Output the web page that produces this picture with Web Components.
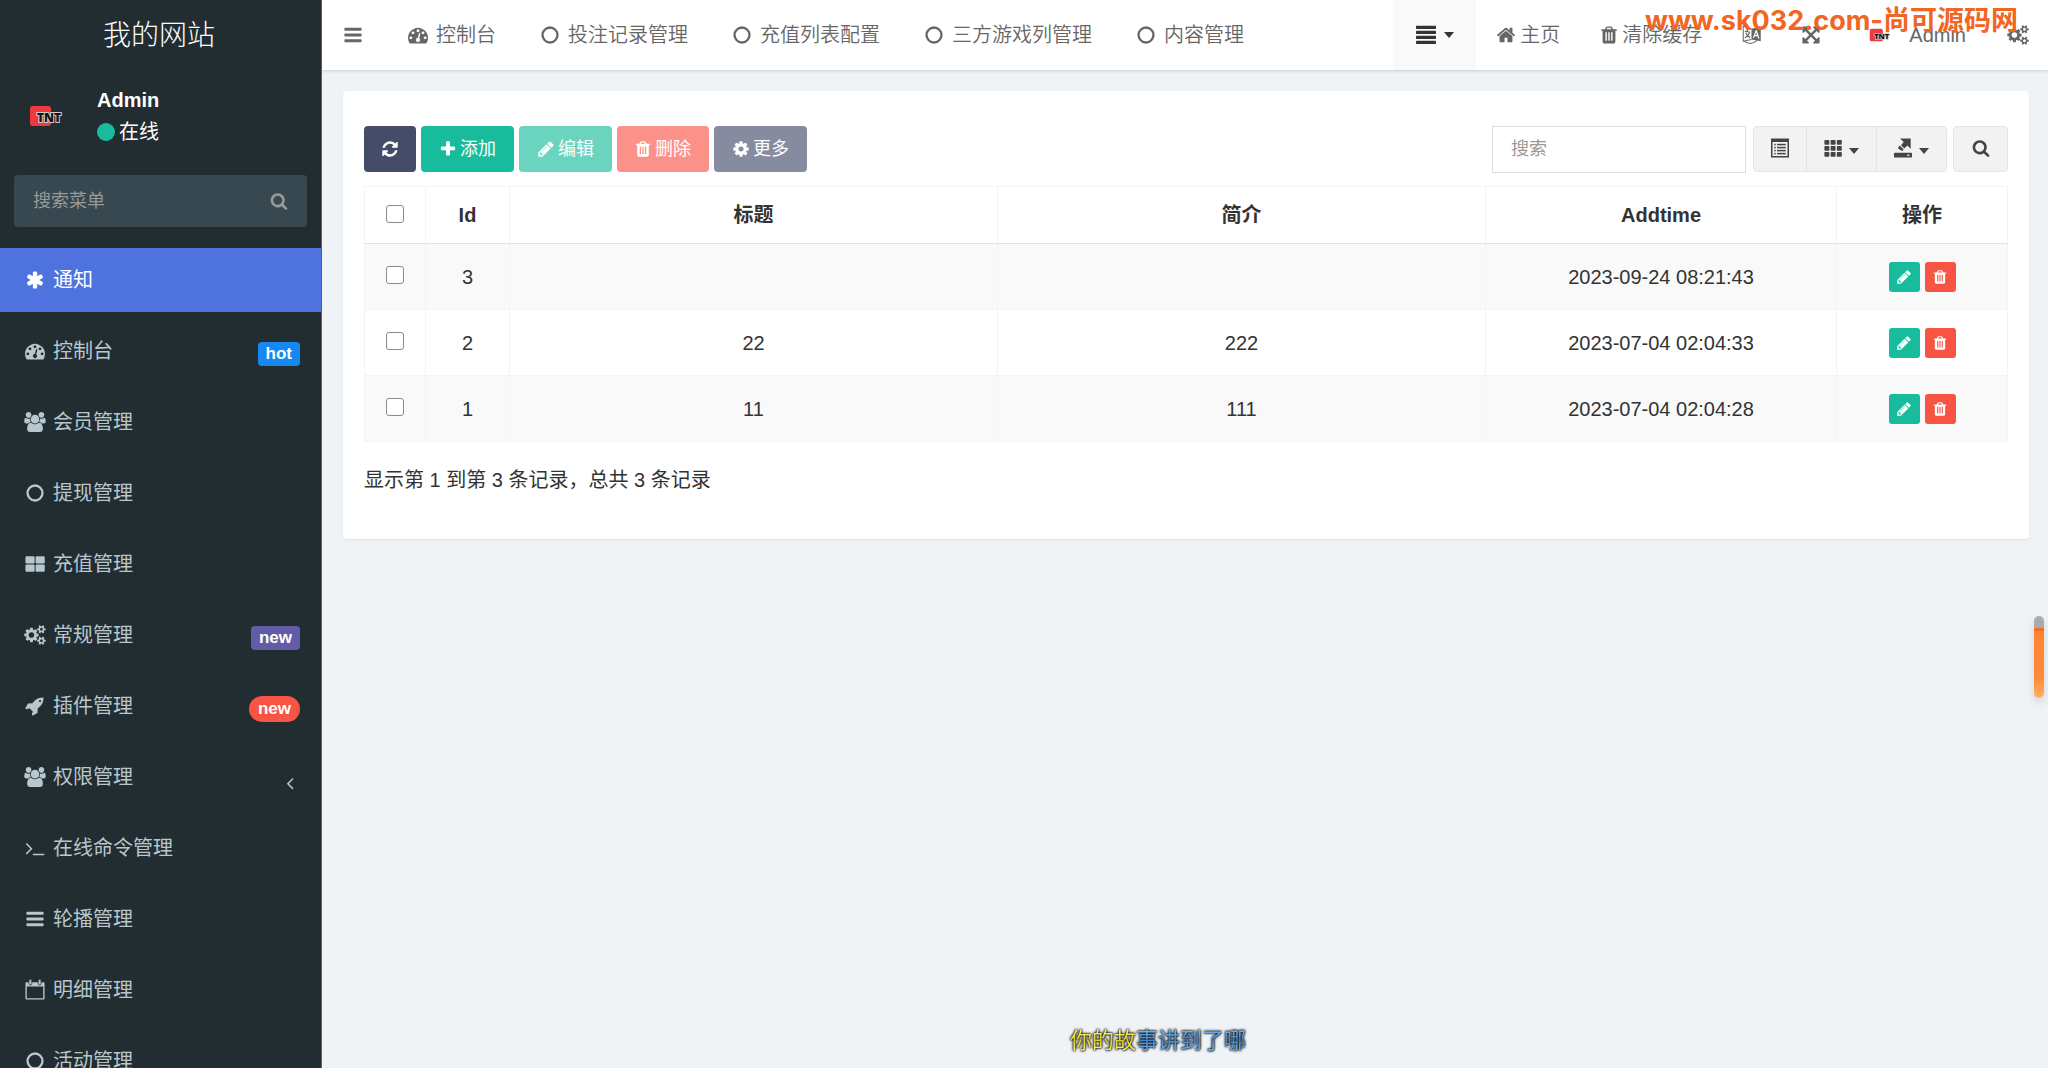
<!DOCTYPE html>
<html lang="zh-CN">
<head>
<meta charset="utf-8">
<title>通知</title>
<style>
html,body{margin:0;height:100%}
body{background:#eff3f6;font:20px/28px "Liberation Sans","Noto Sans CJK SC",sans-serif;color:#333;overflow:hidden}
</style>
</head>
<body>
<admin-app></admin-app>
<script>
const rect=(x,y,w,h,r=0)=>`<rect x="${x}" y="${y}" width="${w}" height="${h}" rx="${r}"/>`;
const path=d=>`<path d="${d}"/>`;
const ICONS={
bars:[256,768,1280].map(y=>rect(128,y,1536,256,64)).join(''),
justify:[60,510,960,1410].map(y=>rect(0,y,1792,290,40)).join(''),
circle:'<circle cx="896" cy="896" r="670" fill="none" stroke="currentColor" stroke-width="210"/>',
thlarge:[[40,200],[950,200],[40,930],[950,930]].map(p=>rect(p[0],p[1],820,650,110)).join(''),
th:[0,1,2].map(r=>[0,1,2].map(c=>rect(40+c*620,100+r*600,490,460,70)).join('')).join(''),
search:path("M1216 832q0-185-131.500-316.500t-316.500-131.500-316.500 131.500-131.500 316.500 131.500 316.500 316.500 131.500 316.500-131.500 131.500-316.500zm512 832q0 52-38 90t-90 38q-54 0-90-38l-343-342q-179 124-399 124-143 0-273.500-55.500t-225-150-150-225-55.500-273.500 55.500-273.500 150-225 225-150 273.500-55.500 273.500 55.500 225 150 150 225 55.500 273.500q0 220-124 399l343 343q37 37 37 90z"),
plus:path("M1600 736v192q0 40-28 68t-68 28h-416v416q0 40-28 68t-68 28h-192q-40 0-68-28t-28-68v-416h-416q-40 0-68-28t-28-68v-192q0-40 28-68t68-28h416v-416q0-40 28-68t68-28h192q40 0 68 28t28 68v416h416q40 0 68 28t28 68z"),
cog:path("M1152 896q0-106-75-181t-181-75-181 75-75 181 75 181 181 75 181-75 75-181zm512-109v222q0 12-8 23t-20 13l-185 28q-19 54-39 91 35 50 107 138 10 12 10 25t-9 23q-27 37-99 108t-94 71q-12 0-26-9l-138-108q-44 23-91 38-16 136-29 186-7 28-36 28h-222q-14 0-24.500-8.500t-11.500-21.500l-28-184q-49-16-90-37l-141 107q-10 9-25 9-14 0-25-11-126-114-165-168-7-10-7-23 0-12 8-23 15-21 51-66.500t54-70.500q-27-50-41-99l-183-27q-13-2-21-12.500t-8-23.500v-222q0-12 8-23t19-13l186-28q14-46 39-92-40-57-107-138-10-12-10-24 0-10 9-23 26-36 98.500-107.500t94.500-71.500q13 0 26 10l138 107q44-23 91-38 16-136 29-186 7-28 36-28h222q14 0 24.500 8.500t11.500 21.500l28 184q49 16 90 37l142-107q9-9 24-9 13 0 25 10 129 119 165 170 7 8 7 22 0 12-8 23-15 21-51 66.500t-54 70.500q26 50 41 98l183 28q13 2 21 12.500t8 23.500z"),
trash:path("M704 1376v-704q0-14-9-23t-23-9h-64q-14 0-23 9t-9 23v704q0 14 9 23t23 9h64q14 0 23-9t9-23zm256 0v-704q0-14-9-23t-23-9h-64q-14 0-23 9t-9 23v704q0 14 9 23t23 9h64q14 0 23-9t9-23zm256 0v-704q0-14-9-23t-23-9h-64q-14 0-23 9t-9 23v704q0 14 9 23t23 9h64q14 0 23-9t9-23zm-544-992h448l-48-117q-7-9-17-11h-317q-10 2-17 11zm928 32v64q0 14-9 23t-23 9h-96v948q0 83-47 143.500t-113 60.500h-832q-66 0-113-58.500t-47-141.500v-952h-96q-14 0-23-9t-9-23v-64q0-14 9-23t23-9h309l70-167q15-37 54-63t79-26h320q40 0 79 26t54 63l70 167h309q14 0 23 9t9 23z"),
pencil:path("M491 1536l91-91-235-235-91 91v107h128v128h107zm523-928q0-22-22-22-10 0-17 7l-542 542q-7 7-7 17 0 22 22 22 10 0 17-7l542-542q7-7 7-17zm-54-192l416 416-832 832h-416v-416zm683 96q0 53-37 90l-166 166-416-416 166-165q36-38 90-38 53 0 91 38l235 234q37 39 37 91z"),
refresh:path("M1639 1056q0 5-1 7-64 268-268 434.500t-478 166.500q-146 0-282.500-55t-243.500-157l-129 129q-19 19-45 19t-45-19-19-45v-448q0-26 19-45t45-19h448q26 0 45 19t19 45-19 45l-137 137q71 66 161 102t187 36q134 0 250-65t186-179q11-17 53-117 8-23 30-23h192q13 0 22.500 9.500t9.500 22.500zm25-800v448q0 26-19 45t-45 19h-448q-26 0-45-19t-19-45 19-45l138-138q-148-137-349-137-134 0-250 65t-186 179q-11 17-53 117-8 23-30 23h-199q-13 0-22.500-9.500t-9.500-22.500v-7q65-268 270-434.500t480-166.500q146 0 284 55.500t245 156.500l130-129q19-19 45-19t45 19 19 45z"),
home:path("M1472 992v480q0 26-19 45t-45 19h-384v-384h-256v384h-384q-26 0-45-19t-19-45v-480q0-1 .5-3t.5-3l575-474 575 474q1 2 1 6zm223-69l-62 74q-8 9-21 11h-3q-13 0-21-7l-692-577-692 577q-12 8-24 7-13-2-21-11l-62-74q-8-10-7-23.500t11-21.500l719-599q32-26 76-26t76 26l244 204v-195q0-14 9-23t23-9h192q14 0 23 9t9 23v408l219 182q10 8 11 21.500t-7 23.500z"),
asterisk:path("M1546 1050q46 26 59.500 77.500t-12.500 97.500l-64 110q-26 46-77.500 59.500t-97.500-12.500l-266-153v307q0 52-38 90t-90 38h-128q-52 0-90-38t-38-90v-307l-266 153q-46 26-97.500 12.500t-77.500-59.500l-64-110q-26-46-12.500-97.500t59.500-77.500l266-154-266-154q-46-26-59.500-77.500t12.500-97.500l64-110q26-46 77.500-59.500t97.500 12.500l266 153v-307q0-52 38-90t90-38h128q52 0 90 38t38 90v307l266-153q46-26 97.500-12.500t77.500 59.500l64 110q26 46 12.500 97.500t-59.500 77.500l-266 154z"),
expand:path("M1411 541l-355 355 355 355 144-144q29-31 70-14 39 17 39 59v448q0 26-19 45t-45 19h-448q-42 0-59-40-17-39 14-69l144-144-355-355-355 355 144 144q31 30 14 69-17 40-59 40h-448q-26 0-45-19t-19-45v-448q0-42 40-59 39-17 69 14l144 144 355-355-355-355-144 144q-19 19-45 19-12 0-24-5-40-17-40-59v-448q0-26 19-45t45-19h448q42 0 59 40 17 39-14 69l-144 144 355 355 355-355-144-144q-31-30-14-69 17-40 59-40h448q26 0 45 19t19 45v448q0 42-39 59-13 5-25 5-26 0-45-19z"),
rocket:path("M1440 448q0-40-28-68t-68-28-68 28-28 68 28 68 68 28 68-28 28-68zm224-288q0 249-75.500 430.500t-253.500 360.500q-81 80-195 176l-20 379q-2 16-16 26l-384 224q-7 4-16 4-12 0-23-9l-64-64q-13-14-8-32l85-276-281-281-276 85q-3 1-9 1-14 0-23-9l-64-64q-17-19-5-39l224-384q10-14 26-16l379-20q96-114 176-195 188-187 358-258t431-71q14 0 24 9.500t10 22.500z"),
terminal:path("M649 983l-466 466q-10 10-23 10t-23-10l-50-50q-10-10-10-23t10-23l393-393-393-393q-10-10-10-23t10-23l50-50q10-10 23-10t23 10l466 466q10 10 10 23t-10 23zm1079 457v64q0 14-9 23t-23 9h-960q-14 0-23-9t-9-23v-64q0-14 9-23t23-9h960q14 0 23 9t9 23z"),
left:path("M1203 544q0 13-10 23l-393 393 393 393q10 10 10 23t-10 23l-50 50q-10 10-23 10t-23-10l-466-466q-10-10-10-23t10-23l466-466q10-10 23-10t23 10l50 50q10 10 10 23z"),
dashboard:path("M384 1152q0-53-37.500-90.500t-90.500-37.500-90.500 37.500-37.500 90.500 37.500 90.500 90.500 37.500 90.500-37.500 37.500-90.500zm192-448q0-53-37.500-90.500t-90.500-37.500-90.500 37.500-37.500 90.500 37.500 90.500 90.500 37.500 90.500-37.500 37.500-90.500zm428 481l101-382q6-26-7.500-48.500t-38.500-29.500-48 6.500-30 39.500l-101 382q-60 5-107 43.500t-63 98.500q-20 77 20 146t117 89 146-20 89-117q16-60-6-117t-72-91zm660-33q0-53-37.500-90.500t-90.500-37.500-90.500 37.500-37.500 90.500 37.500 90.500 90.500 37.500 90.500-37.500 37.500-90.500zm-640-640q0-53-37.500-90.500t-90.500-37.500-90.500 37.500-37.500 90.500 37.500 90.500 90.500 37.500 90.500-37.500 37.500-90.500zm448 192q0-53-37.500-90.500t-90.500-37.500-90.500 37.500-37.500 90.500 37.500 90.500 90.500 37.500 90.500-37.500 37.500-90.500zm320 448q0 261-141 483-19 29-54 29h-1402q-35 0-54-29-141-221-141-483 0-182 71-348t191-286 286-191 348-71 348 71 286 191 191 286 71 348z"),
group:path("M529 896q-162 5-265 128h-134q-82 0-138-40.500t-56-118.500q0-353 124-353 6 0 43.500 21t97.500 42.500 119 21.500q67 0 133-23-5 37-5 66 0 139 81 256zm1071 637q0 120-73 189.500t-194 69.500h-874q-121 0-194-69.500t-73-189.500q0-53 3.500-103.500t14-109 26.500-108.500 43-97.500 62-81 85.500-53.500 111.500-20q10 0 43 21.500t73 48 107 48 135 21.500 135-21.500 107-48 73-48 43-21.500q61 0 111.500 20t85.500 53.500 62 81 43 97.500 26.500 108.500 14 109 3.500 103.500zm-1024-1277q0 106-75 181t-181 75-181-75-75-181 75-181 181-75 181 75 75 181zm704 384q0 159-112.500 271.500t-271.500 112.500-271.500-112.500-112.500-271.500 112.500-271.500 271.500-112.500 271.500 112.500 112.500 271.500zm576 225q0 78-56 118.500t-138 40.500h-134q-103-123-265-128 81-117 81-256 0-29-5-66 66 23 133 23 59 0 119-21.500t97.500-42.500 43.500-21q124 0 124 353zm-128-609q0 106-75 181t-181 75-181-75-75-181 75-181 181-75 181 75 75 181z"),
cogs:path("M832 896q0-106-75-181t-181-75-181 75-75 181 75 181 181 75 181-75 75-181zm768 512q0-52-38-90t-90-38-90 38-38 90q0 53 37.500 90.500t90.500 37.500 90.500-37.500 37.500-90.500zm0-1024q0-52-38-90t-90-38-90 38-38 90q0 53 37.500 90.500t90.500 37.500 90.500-37.500 37.500-90.500zm-384 421v185q0 10-7 19.500t-16 10.500l-155 24q-11 35-32 76 34 48 90 115 7 11 7 20 0 12-7 19-23 30-82.500 89.500t-78.500 59.500q-11 0-21-7l-115-90q-37 19-77 31-11 108-23 155-7 24-30 24h-186q-11 0-20-7.500t-10-17.500l-23-153q-34-10-75-31l-118 89q-7 7-20 7-11 0-21-8-144-133-144-160 0-9 7-19 10-14 41-53t47-61q-23-44-35-82l-152-24q-10-1-17-9.500t-7-19.500v-185q0-10 7-19.500t16-10.500l155-24q11-35 32-76-34-48-90-115-7-11-7-20 0-12 7-20 22-30 82-89t79-59q11 0 21 7l115 90q34-18 77-32 11-108 23-154 7-24 30-24h186q11 0 20 7.500t10 17.500l23 153q34 10 75 31l118-89q8-7 20-7 11 0 21 8 144 133 144 160 0 8-7 19-12 16-42 54t-45 60q23 48 34 82l152 23q10 2 17 10.500t7 19.500zm640 533v140q0 16-149 31-12 27-30 52 51 113 51 138 0 4-4 7-122 71-124 71-8 0-46-47t-52-68q-20 2-30 2t-30-2q-14 21-52 68t-46 47q-2 0-124-71-4-3-4-7 0-25 51-138-18-25-30-52-149-15-149-31v-140q0-16 149-31 13-29 30-52-51-113-51-138 0-4 4-7 4-2 35-20t59-34 30-16q8 0 46 46.500t52 67.500q20-2 30-2t30 2q51-71 92-112l6-2q4 0 124 70 4 3 4 7 0 25-51 138 17 23 30 52 149 15 149 31zm0-1024v140q0 16-149 31-12 27-30 52 51 113 51 138 0 4-4 7-122 71-124 71-8 0-46-47t-52-68q-20 2-30 2t-30-2q-14 21-52 68t-46 47q-2 0-124-71-4-3-4-7 0-25 51-138-18-25-30-52-149-15-149-31v-140q0-16 149-31 13-29 30-52-51-113-51-138 0-4 4-7 4-2 35-20t59-34 30-16q8 0 46 46.500t52 67.500q20-2 30-2t30 2q51-71 92-112l6-2q4 0 124 70 4 3 4 7 0 25-51 138 17 23 30 52 149 15 149 31z"),
calendar:'<path fill-rule="evenodd" d="M40 300q0-90 90-90h1532q90 0 90 90v1360q0 90-90 90h-1532q-90 0-90-90zM160 590v1040h1472v-1040z"/><g stroke="#222d32" stroke-width="70"><rect x="350" y="-60" width="260" height="510" rx="130"/><rect x="1182" y="-60" width="260" height="510" rx="130"/></g>',
lang:'<g fill="none" stroke="currentColor"><path stroke-width="90" d="M850 330L110 90V1450L850 1290M180 1450q620 420 1150-40"/><path stroke-width="110" d="M250 560l480 90M450 420l50 160M680 680q-120 330-430 480M330 700q140 300 400 430"/></g><path fill-rule="evenodd" d="M850 330L1680 130V1460L850 1290zM1080 1170l60-160h240l70 200 120 20-240-760h-110l-240 680zM1180 890l80-250 80 250z"/>',
listalt:'<path fill-rule="evenodd" d="M0 -60h1792v1912H0zM150 300v1402h1492V300z"/>'+[480,780,1080,1380].map(y=>rect(320,y,150,150)+rect(600,y,870,150)).join(''),
share:rect(0,1380,1792,472,90)+'<path d="M600-60h1060v1030l-330-330-300 300-330-330 270-300z"/><path d="M700 770l270 270-150 150-420-250 130-300z"/><rect x="1300" y="1560" width="260" height="110" fill="#f2f2f2"/>'
};
const shadow=(el,html)=>{el.attachShadow({mode:'open'}).innerHTML=html};

customElements.define('fa-icon',class extends HTMLElement{
  connectedCallback(){
    shadow(this,`<style>:host{display:inline-flex;flex:none;align-items:center;justify-content:center;width:var(--w,20px);height:var(--s,20px)}svg{flex:none;width:var(--s,20px);height:var(--s,20px);overflow:visible;fill:currentColor;color:inherit}</style>
    <svg viewBox="0 0 1792 1792" aria-hidden="true">${ICONS[this.getAttribute('name')]}</svg>`);
  }
});

customElements.define('caret-down',class extends HTMLElement{
  connectedCallback(){
    shadow(this,`<style>:host{display:inline-block;flex:none;border:5px solid transparent;border-top:6px solid currentColor;border-bottom:0}</style>`);
  }
});

customElements.define('tnt-avatar',class extends HTMLElement{
  connectedCallback(){
    shadow(this,`<style>:host{display:block;flex:none}svg{display:block;width:100%;height:100%}</style>
    <svg viewBox="0 0 64 64" role="img" aria-label="TNT"><rect x="14" y="22" width="21" height="20" rx="3" fill="#ee3a3c"/>
    <text x="21" y="38" font-family="Open Sans,sans-serif" font-weight="800" font-size="12" fill="#151515" stroke="#c9c9c9" stroke-width="2" paint-order="stroke">TNT</text></svg>`);
  }
});

customElements.define('side-item',class extends HTMLElement{
  connectedCallback(){
    const badge=this.getAttribute('badge'),kind=this.getAttribute('kind')||'';
    shadow(this,`<style>
    :host{display:block}
    a{display:flex;align-items:center;gap:8px;height:64px;padding:0 21px 0 24px;color:#b8c7ce;text-decoration:none}
    :host([active]) a{background:#4e73df;color:#fff}
    fa-icon{--w:21px}
    .badge{margin:5px 0 0 auto;padding:0 8px;border-radius:4px;background:#1688f1;color:#fff;font-weight:700;font-size:17px;line-height:24px}
    .purple{background:#605ca8}.red{background:#f75444;border-radius:13px;padding:0 9px;line-height:26px}
    .arrow{margin:12px 0 0 auto}
    </style><a href="#"><fa-icon name="${this.getAttribute('icon')}"></fa-icon><slot></slot>
    ${badge?`<span class="badge ${kind}">${badge}</span>`:''}${this.hasAttribute('tree')?'<fa-icon class="arrow" name="left"></fa-icon>':''}</a>`);
  }
});

customElements.define('side-bar',class extends HTMLElement{
  connectedCallback(){
    shadow(this,`<style>
    :host{display:flex;flex-direction:column;flex:none;box-sizing:border-box;width:322px;height:100vh;overflow:hidden;background:#222d32;border-right:1px solid #59646a}
    .logo{flex:none;height:70px;line-height:72px;padding-right:3px;text-align:center;font-size:28px;font-weight:300;color:#fff;text-decoration:none}
    .user{display:flex;flex:none;height:92px;gap:17px;padding:14px 16px 0;box-sizing:border-box;color:#fff}
    tnt-avatar{width:64px;height:64px}
    .name{font-weight:700;line-height:32px}
    .state{display:flex;align-items:center;gap:4px;line-height:32px}
    .dot{width:18px;height:18px;border-radius:50%;background:#18bc9c}
    .find{display:flex;flex:none;align-items:center;margin:13px 14px 21px;height:52px;border-radius:4px;background:#374850;color:#999}
    input{flex:1;min-width:0;height:52px;padding:0 0 0 19px;box-sizing:border-box;border:0;background:none;outline:0;font:inherit;font-size:18px;color:#fff}
    input::placeholder{color:#999;opacity:1}
    button{display:flex;border:0;background:none;color:inherit;padding:0 18px;}
    nav{display:flex;flex-direction:column;gap:7px}
    </style>
    <a class="logo" href="#">我的网站</a>
    <div class="user"><tnt-avatar></tnt-avatar><div><div class="name">Admin</div><div class="state"><span class="dot"></span>在线</div></div></div>
    <form class="find"><input type="text" placeholder="搜索菜单" aria-label="搜索菜单"><button type="button" aria-label="搜索"><fa-icon name="search" style="--s:18px"></fa-icon></button></form>
    <nav>
      <side-item icon="asterisk" active>通知</side-item>
      <side-item icon="dashboard" badge="hot">控制台</side-item>
      <side-item icon="group">会员管理</side-item>
      <side-item icon="circle">提现管理</side-item>
      <side-item icon="thlarge">充值管理</side-item>
      <side-item icon="cogs" badge="new" kind="purple">常规管理</side-item>
      <side-item icon="rocket" badge="new" kind="red">插件管理</side-item>
      <side-item icon="group" tree>权限管理</side-item>
      <side-item icon="terminal">在线命令管理</side-item>
      <side-item icon="bars">轮播管理</side-item>
      <side-item icon="calendar">明细管理</side-item>
      <side-item icon="circle">活动管理</side-item>
    </nav>`);
  }
});

customElements.define('nav-link',class extends HTMLElement{
  connectedCallback(){
    shadow(this,`<style>:host{display:block;--gap:7px;--w:22px}a{display:flex;align-items:center;gap:var(--gap);height:54px;color:inherit;text-decoration:none;white-space:nowrap}</style>
    <a href="#" aria-label="${this.getAttribute('label')||this.textContent}">${this.hasAttribute('icon')?`<fa-icon name="${this.getAttribute('icon')}"></fa-icon>`:'<slot name="media"></slot>'}<slot></slot></a>`);
  }
});

customElements.define('top-bar',class extends HTMLElement{
  connectedCallback(){
    shadow(this,`<style>
    :host{display:flex;flex:none;height:70px;background:#fff;color:#666;font-weight:350;box-shadow:0 1px 3px rgba(0,0,0,.16)}
    button{border:0;padding:0;font:inherit;color:inherit}
    .toggle{display:flex;align-items:center;background:none;padding:0 0 0 20px;margin-right:43px}
    .tabs,.tools{display:flex;align-items:center}
    .tabs{gap:43px;height:70px}
    .menu{display:flex;align-items:center;justify-content:center;gap:8px;width:83px;height:70px;margin-left:auto;background:#f9f9f9;color:#333}
    .tools{gap:41px;padding:0 20px 0 21px}
    .tools nav-link{--gap:5px;--w:18px}
    .tools .trash{--w:16px}.tools .cogs{--w:21px}.tools .me{--gap:8px}
    tnt-avatar{width:40px;height:48px}
    </style>
    <button class="toggle" type="button" aria-label="菜单"><fa-icon name="bars" style="--w:22px"></fa-icon></button>
    <nav class="tabs">
      <nav-link icon="dashboard">控制台</nav-link><nav-link icon="circle">投注记录管理</nav-link><nav-link icon="circle">充值列表配置</nav-link><nav-link icon="circle">三方游戏列管理</nav-link><nav-link icon="circle">内容管理</nav-link>
    </nav>
    <button class="menu" type="button" aria-label="列表"><fa-icon name="justify"></fa-icon><caret-down></caret-down></button>
    <div class="tools">
      <nav-link icon="home">主页</nav-link><nav-link class="trash" icon="trash">清除缓存</nav-link>
      <nav-link icon="lang" label="语言"></nav-link><nav-link icon="expand" label="全屏"></nav-link>
      <nav-link class="me"><tnt-avatar slot="media"></tnt-avatar>Admin</nav-link>
      <nav-link class="cogs" icon="cogs" label="设置"></nav-link>
    </div>`);
  }
});

customElements.define('tool-button',class extends HTMLElement{
  connectedCallback(){
    shadow(this,`<style>:host{display:block;--s:18px;--w:17px}
    button{display:flex;align-items:center;gap:4px;height:46px;padding:0 18px;border:0;border-radius:4px;background:var(--bg);color:#fff;font:inherit;font-size:18px;line-height:26px;white-space:nowrap}
    :host([icon=refresh]),:host([icon=trash]){--w:16px}
    :host([small]) button{height:30px;width:31px;padding:0;justify-content:center;border-radius:3px}
    :host([small]){--s:16px}
    </style><button type="button" aria-label="${this.getAttribute('label')||this.textContent}"><fa-icon name="${this.getAttribute('icon')}"></fa-icon><slot></slot></button>`);
  }
});

customElements.define('table-toolbar',class extends HTMLElement{
  connectedCallback(){
    shadow(this,`<style>
    :host{display:flex;gap:5px;height:47px;align-items:flex-start}
    input{box-sizing:border-box;width:254px;height:47px;margin:0 2px 0 auto;padding:0 18px;border:1px solid #dcdee4;border-radius:0;font:inherit;font-size:18px;outline:0}
    input::placeholder{color:#999;opacity:1}
    .group{display:flex;margin-right:1px}
    button{display:flex;align-items:center;justify-content:center;gap:7px;box-sizing:border-box;height:46px;border:1px solid #e4e4e4;background:#f2f2f2;color:#444;padding:0 0 2px;border-radius:4px;--s:18px;--w:18px}
    .group button+button{margin-left:-1px}
    .group button:first-child{width:54px;border-radius:4px 0 0 4px}
    .group button:nth-child(2){width:71px;border-radius:0}
    .group button:nth-child(3){width:71px;border-radius:0 4px 4px 0}
    .go{width:55px}
    caret-down{margin-top:5px}
    </style>
    <tool-button icon="refresh" label="刷新" style="--bg:#444c69"></tool-button>
    <tool-button icon="plus" style="--bg:#18bc9c">添加</tool-button>
    <tool-button icon="pencil" style="--bg:#6bd4bf">编辑</tool-button>
    <tool-button icon="trash" style="--bg:#fb9188">删除</tool-button>
    <tool-button icon="cog" style="--bg:#868ba0">更多</tool-button>
    <input type="text" placeholder="搜索" aria-label="搜索">
    <div class="group"><button type="button" aria-label="切换"><fa-icon name="listalt"></fa-icon></button><button type="button" aria-label="列"><fa-icon name="th"></fa-icon><caret-down></caret-down></button><button type="button" aria-label="导出"><fa-icon name="share"></fa-icon><caret-down></caret-down></button></div>
    <button class="go" type="button" aria-label="搜索"><fa-icon name="search"></fa-icon></button>`);
  }
});

customElements.define('notice-table',class extends HTMLElement{
  connectedCallback(){
    const rows=[['3','','','2023-09-24 08:21:43'],['2','22','222','2023-07-04 02:04:33'],['1','11','111','2023-07-04 02:04:28']];
    shadow(this,`<style>
    :host{display:block}
    table{width:100%;table-layout:fixed;border-collapse:collapse;text-align:center}
    th,td{border:1px solid #f4f4f4;padding:0;box-sizing:border-box}
    th{height:57px;border-bottom-color:#e4e4e4}
    td{height:66px}
    tbody tr:nth-child(odd){background:#f9f9f9}
    .c{width:61px}.i{width:84px}.d{width:351px}.o{width:171px}
    input{display:block;appearance:none;box-sizing:border-box;width:18px;height:18px;margin:0 auto 3px;border:1px solid #8a8a8a;border-radius:3px;background:#fff}
    .ops{display:flex;justify-content:center;gap:5px}
    p{margin:24px 0 0}
    </style>
    <table><thead><tr><th class="c"><input type="checkbox" aria-label="全选"></th><th class="i">Id</th><th>标题</th><th>简介</th><th class="d">Addtime</th><th class="o">操作</th></tr></thead>
    <tbody>${rows.map(r=>`<tr><td><input type="checkbox" aria-label="选择 ${r[0]}"></td>${r.map(v=>`<td>${v}</td>`).join('')}<td><div class="ops"><tool-button small icon="pencil" label="编辑" style="--bg:#18bc9c"></tool-button><tool-button small icon="trash" label="删除" style="--bg:#f75444"></tool-button></div></td></tr>`).join('')}</tbody></table>
    <p>显示第 1 到第 3 条记录，总共 3 条记录</p>`);
  }
});

customElements.define('panel-card',class extends HTMLElement{
  connectedCallback(){
    shadow(this,`<style>:host{display:flex;flex-direction:column;gap:13px;margin:21px 19px 0 21px;padding:35px 21px 45px;background:#fff;border-radius:4px;box-shadow:0 1px 2px rgba(0,0,0,.07)}</style><slot></slot>`);
  }
});

customElements.define('site-mark',class extends HTMLElement{
  connectedCallback(){
    shadow(this,`<style>:host{position:absolute;right:30px;top:1px;display:block;white-space:nowrap;font:700 27px/40px Inter,"Noto Sans CJK SC",sans-serif;color:#f26522;pointer-events:none}</style><slot></slot>`);
  }
});

customElements.define('lyric-line',class extends HTMLElement{
  connectedCallback(){
    shadow(this,`<style>:host{position:absolute;left:1070px;bottom:14px;display:block;white-space:nowrap;font:22px/32px "Noto Sans CJK SC",sans-serif;filter:drop-shadow(0 0 1px #000) drop-shadow(0 0 1px #333);pointer-events:none}
    span{color:transparent;background:linear-gradient(#fff36a 30%,#d8cf20 55%,#f4ea50 80%);-webkit-background-clip:text;background-clip:text}
    .rest{background-image:linear-gradient(#66b4f4 30%,#3a82d0 55%,#5aa8ec 80%)}</style><span>你的故</span><span class="rest">事讲到了哪</span>`);
  }
});

customElements.define('scroll-thumb',class extends HTMLElement{
  connectedCallback(){
    shadow(this,`<style>:host{position:absolute;right:4px;top:616px;width:10px;height:82px;border-radius:5px;background:linear-gradient(#a9abad 12px,#f0701c 12px,#f0701c 15px,#ff8433 15px,#ff8a3a 75%,#ffb066);box-shadow:0 5px 8px rgba(0,0,0,.12)}</style>`);
  }
});

customElements.define('admin-app',class extends HTMLElement{
  connectedCallback(){
    shadow(this,`<style>:host{display:flex;position:relative;height:100vh;overflow:hidden}main{flex:1;min-width:0}</style>
    <side-bar></side-bar>
    <main><top-bar></top-bar><panel-card><table-toolbar></table-toolbar><notice-table></notice-table></panel-card></main>
    <site-mark>www.sk032.com-尚可源码网</site-mark><lyric-line></lyric-line><scroll-thumb></scroll-thumb>`);
  }
});
</script>
</body>
</html>
